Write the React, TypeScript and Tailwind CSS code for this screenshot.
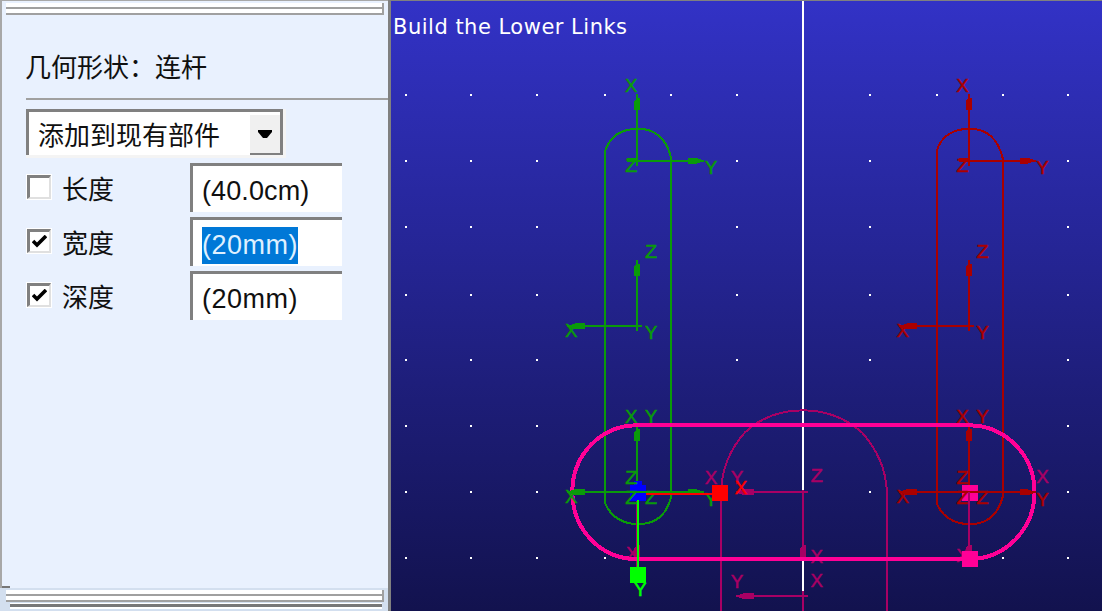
const GREEN = "#0a9a0a";
const RED = "#aa0000";
const PURPLE = "#a80064";
const PINK = "#ff0096";
const CJK = "font-['Noto_Sans_CJK_SC','Liberation_Sans',sans-serif]";

function Label({ t, x, y, c }: { t: string; x: number; y: number; c: string }) {
  return (
    <text
      x={x}
      y={y + 7}
      fill={c}
      stroke={c}
      strokeWidth={0.4}
      fontSize={21}
      fontFamily="'Liberation Mono', monospace"
      textAnchor="middle"
    >
      {t}
    </text>
  );
}

function Up({ x, y, c }: { x: number; y: number; c: string }) {
  return <path d={`M${x - 3} ${y + 16}V${y + 7}L${x} ${y + 4}L${x + 3} ${y + 4}V${y + 16}Z`} fill={c} />;
}
function Right({ x, y, c }: { x: number; y: number; c: string }) {
  return <path d={`M${x - 16} ${y - 3}H${x - 8}L${x - 2} ${y - 1}V${y + 1}L${x - 8} ${y + 3}H${x - 16}Z`} fill={c} />;
}
function Left({ x, y, c }: { x: number; y: number; c: string }) {
  return <path d={`M${x + 18} ${y - 3}H${x + 8}L${x + 2} ${y - 1}V${y + 1}L${x + 8} ${y + 3}H${x + 18}Z`} fill={c} />;
}

function Link({ o, c }: { o: number; c: string }) {
  const x = (n: number) => n + o;
  return (
    <g>
      <path
        d={`M${x(605)} 503V150C${x(610)} 135 ${x(622)} 128 ${x(638)} 128C${x(654)} 128 ${x(666)} 137 ${x(671)} 157V497C${x(666)} 516 ${x(654)} 524 ${x(638)} 524C${x(622)} 524 ${x(610)} 516 ${x(605)} 503Z`}
        fill="none"
        stroke={c}
        strokeWidth={2}
      />
      <path d={`M${x(637)} 93V165M${x(627)} 160H${x(704)}M${x(627)} 158H${x(637)}`} stroke={c} strokeWidth={2} fill="none" />
      <Up x={x(637)} y={93} c={c} />
      <Right x={x(704)} y={160} c={c} />
      <Label t="X" x={x(631)} y={84} c={c} />
      <Label t="Y" x={x(711)} y={166} c={c} />
      <Label t="Z" x={x(631)} y={164} c={c} />
      <path d={`M${x(637)} 259V331M${x(567)} 326H${x(642)}`} stroke={c} strokeWidth={2} fill="none" />
      <Up x={x(637)} y={259} c={c} />
      <Left x={x(567)} y={326} c={c} />
      <Label t="Z" x={x(651)} y={250} c={c} />
      <Label t="Y" x={x(651)} y={332} c={c} />
      <Label t="X" x={x(571)} y={330} c={c} />
      <path d={`M${x(637)} 425V492`} stroke={c} strokeWidth={2} fill="none" />
      <Up x={x(637)} y={425} c={c} />
      <Label t="X" x={x(631)} y={416} c={c} />
      <Label t="Y" x={x(651)} y={416} c={c} />
    </g>
  );
}

function BottomTriad({ o, c }: { o: number; c: string }) {
  const x = (n: number) => n + o;
  return (
    <g>
      <path d={`M${x(567)} 492H${x(704)}`} stroke={c} strokeWidth={2} fill="none" />
      <Left x={x(567)} y={492} c={c} />
      <Right x={x(704)} y={492} c={c} />
      <Label t="Z" x={x(631)} y={477} c={c} />
      <Label t="X" x={x(571)} y={496} c={c} />
      <Label t="Z" x={x(631)} y={497} c={c} />
      <Label t="Z" x={x(651)} y={497} c={c} />
    </g>
  );
}

function Canvas() {
  const dotsX = [405, 471, 537, 605, 671, 737, 803, 870, 937, 1003, 1069];
  const dotsY = [94, 160, 226, 294, 360, 426, 492, 558];
  return (
    <svg className="absolute inset-0 w-full h-full" viewBox="391 0 711 611" shapeRendering="crispEdges">
      {dotsY.flatMap((y) =>
        dotsX.map((x) => <rect key={`${x}-${y}`} x={x - 1} y={y - 1} width={2} height={2} fill="#ffffff" />)
      )}
      <rect x={802} y={0} width={2} height={611} fill="#ffffff" />
      <Link o={0} c={GREEN} />
      <Link o={332} c={RED} />
      <path
        d="M721 611V490C722 470 729 450 745 432C760 418 780 410 803 410C826 410 846 418 862 432C878 450 886 470 887 490V611"
        fill="none"
        stroke={PURPLE}
        strokeWidth={2}
      />
      <path d="M736 492H808M803 490V550M736 596H808M803 591V611M637 492V567M969 492V567" stroke={PURPLE} strokeWidth={2} fill="none" />
      <Left x={736} y={492} c={PURPLE} />
      <Left x={736} y={596} c={PURPLE} />
      <Up x={803} y={541} c={PURPLE} />
      <Up x={637} y={541} c={PURPLE} />
      <Up x={969} y={541} c={PURPLE} />
      <Label t="X" x={711} y={477} c={PURPLE} />
      <Label t="Y" x={737} y={477} c={PURPLE} />
      <Label t="Z" x={817} y={475} c={PURPLE} />
      <Label t="X" x={817} y={556} c={PURPLE} />
      <Label t="Y" x={737} y={581} c={PURPLE} />
      <Label t="X" x={817} y={580} c={PURPLE} />
      <Label t="X" x={1043} y={476} c={PURPLE} />
      <Label t="X" x={632} y={553} c={PURPLE} />
      <Label t="X" x={963} y={555} c={PURPLE} />
      <Label t="X" x={741} y={487} c="#ff0000" />
      <Label t="Y" x={711} y={499} c={GREEN} />
      <path
        d="M637 425H969C1006 425 1035 455 1035 492C1035 529 1006 559 969 559H637C600 559 572 529 572 492C572 455 600 425 637 425Z"
        fill="none"
        stroke={PINK}
        strokeWidth={4}
      />
      <path d="M630 485H634V481H642V485H646V501H630Z" fill="#0000ff" />
      <rect x={962} y={485} width={16} height={16} fill={PINK} />
      <BottomTriad o={0} c={GREEN} />
      <BottomTriad o={332} c={RED} />
      <Label t="Y" x={1043} y={499} c={RED} />
      <path d="M646 494H712" stroke="#ff0000" strokeWidth={2} />
      <path d="M638 500V569" stroke="#00ff00" strokeWidth={2} />
      <rect x={712} y={485} width={16} height={16} fill="#ff0000" />
      <rect x={630} y={567} width={16} height={16} fill="#00ff00" />
      <Label t="Y" x={640} y={589} c="#00ff00" />
      <rect x={962} y={551} width={16} height={16} fill={PINK} />
      <path d="M969 492V540" stroke={PURPLE} strokeWidth={2} />
    </svg>
  );
}

function CheckRow({
  label,
  checked,
  value,
  selected,
  wide,
}: {
  label: string;
  checked: boolean;
  value: string;
  selected?: boolean;
  wide?: boolean;
}) {
  return (
    <div className="flex items-center h-[48px] mb-[6px]">
      <div className="ml-[26px] w-[26px] h-[26px] bg-white border-[1px] border-white flex">
        <div className="flex-1 flex items-center justify-center bg-white border-t-[3px] border-l-[3px] border-b-[2px] border-r-[2px] border-t-[#808080] border-l-[#808080] border-b-[#e0e0e0] border-r-[#e0e0e0]">
          {checked && (
            <svg width="15" height="13" viewBox="0 0 15 13">
              <path d="M1 6L5 10L14 1" fill="none" stroke="#000" strokeWidth="3.6" />
            </svg>
          )}
        </div>
      </div>
      <span className={`ml-[10px] w-[128px] pt-[2px] text-[26px] leading-none text-[#101010] ${CJK}`}>{label}</span>
      <div className="w-[152px] h-[49px] bg-white border-t-[3px] border-l-[3px] border-t-[#808080] border-l-[#808080] flex items-center pl-[9px] pt-[6px]">
        <span
          className={`font-['Liberation_Sans',sans-serif] text-[27px] leading-[37px] h-[37px] ${
            wide ? "tracking-[0.5px]" : "tracking-[0.1px]"
          } ${selected ? "bg-[#0078d7] text-[#dff0ff]" : "text-[#101010]"}`}
        >
          {value}
        </span>
      </div>
    </div>
  );
}

function Grip() {
  return (
    <div className="ml-[6px] w-[378px] h-[12px] bg-white border-b-[2px] border-r-[2px] border-[#a0a0a0] flex flex-col">
      <div className="h-[4px]" />
      <div className="h-[2px] bg-[#a0a0a0]" />
    </div>
  );
}

export default function App() {
  return (
    <div className="flex w-[1102px] h-[611px] overflow-hidden bg-[#e9f1fe]">
      <div className="w-[388px] shrink-0 flex flex-col border-l-[2px] border-t-[1px] border-[#a8a8a8]">
        <div className="pt-[2px] -ml-[2px]">
          <Grip />
        </div>
        <div className={`ml-[23px] mt-[36px] text-[26px] leading-[30px] text-[#101010] ${CJK}`}>{"几何形状\uFF1A连杆"}</div>
        <div className="ml-[24px] mt-[17px] h-[2px] bg-[#a0a0a0]" />
        <div className="ml-[24px] mt-[9px] w-[260px] h-[49px] bg-[#f4f4f4] pr-[3px] pb-[3px]">
          <div className="h-full bg-white border-t-[3px] border-l-[3px] border-r-[3px] border-[#808080] flex items-stretch justify-between">
            <span className={`ml-[9px] self-center pt-[1px] text-[26px] leading-none text-[#101010] ${CJK}`}>添加到现有部件</span>
            <div className="w-[30px] mt-[3px] bg-[#f0f0f0] border-b-[2px] border-[#808080] flex items-center justify-center">
              <svg width="14" height="8" viewBox="0 0 14 8">
                <path d="M0 0H14V2L9 8H5L0 2Z" fill="#000" />
              </svg>
            </div>
          </div>
        </div>
        <div className="mt-[5px]">
          <div className="-ml-[2px]">
            <CheckRow label="长度" checked={false} value="(40.0cm)" />
            <CheckRow label="宽度" checked value="(20mm)" selected wide />
            <CheckRow label="深度" checked value="(20mm)" wide />
          </div>
        </div>
        <div className="flex-1" />
        <div className="w-[8px] h-[2px] bg-[#777777]" />
        <div className="-ml-[2px] h-[23px] bg-[#d3dfef] pt-[2px] flex flex-col">
          <Grip />
          <div className="ml-[10px] mt-[1px] w-[372px] h-[6px] bg-white">
            <div className="h-[3px] mt-[1px] bg-[#777777]" />
          </div>
        </div>
      </div>
      <div className="w-[3px] shrink-0 bg-[#808080]" />
      <div className="relative flex-1 border-t-[1px] border-[#808080] bg-[linear-gradient(to_bottom,#3232c6,#12124e)]">
        <Canvas />
        <div className="relative pl-[2px] pt-[12px] font-['DejaVu_Sans',sans-serif] text-[21px] leading-[28px] tracking-[0.5px] text-white">
          Build the Lower Links
        </div>
      </div>
    </div>
  );
}
